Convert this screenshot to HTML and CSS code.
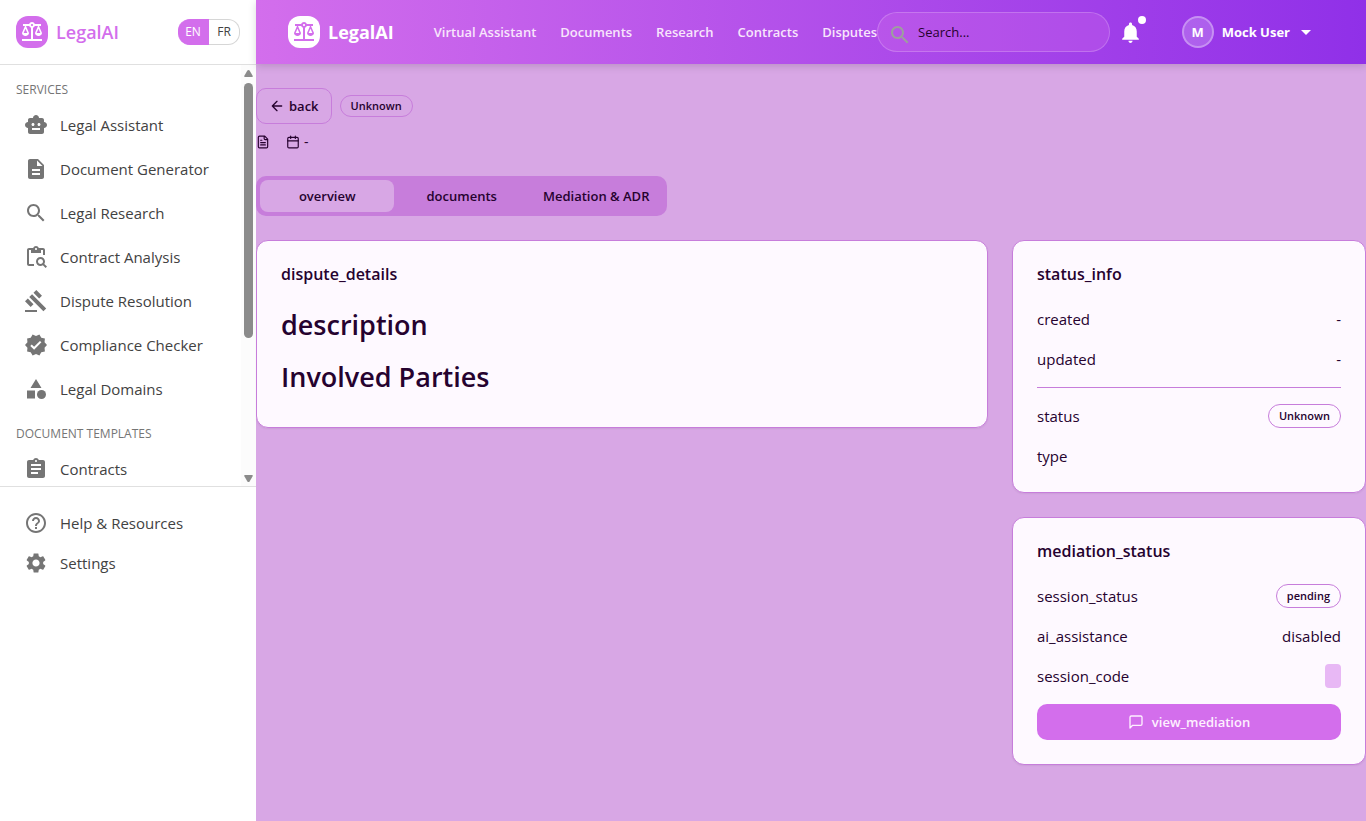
FILE: index.html
```html
<!DOCTYPE html>
<html lang="en">
<head>
<meta charset="utf-8">
<meta name="viewport" content="width=device-width, initial-scale=1">
<title>LegalAI</title>
<link rel="stylesheet" href="styles.css">
</head>
<body>
<svg class="sprite" aria-hidden="true">
  <symbol id="i-balance" viewBox="0 0 24 24"><path d="M13 7.83c.85-.3 1.53-.98 1.83-1.83H18l-3 7c0 1.66 1.57 3 3.5 3s3.5-1.34 3.5-3l-3-7h2V4h-6.17c-.41-1.17-1.52-2-2.83-2s-2.42.83-2.83 2H3v2h2l-3 7c0 1.66 1.57 3 3.5 3S9 14.66 9 13L6 6h3.17c.3.85.98 1.53 1.83 1.83V19H2v2h20v-2h-9V7.83zM20.37 13h-3.74l1.87-4.36L20.37 13zm-13 0H3.63L5.5 8.64 7.37 13zM12 6c-.55 0-1-.45-1-1s.45-1 1-1 1 .45 1 1-.45 1-1 1z"/></symbol>
  <symbol id="i-robot" viewBox="0 0 24 24"><path d="M20 9V7c0-1.1-.9-2-2-2h-3c0-1.66-1.34-3-3-3S9 3.34 9 5H6c-1.1 0-2 .9-2 2v2c-1.66 0-3 1.34-3 3s1.34 3 3 3v4c0 1.1.9 2 2 2h12c1.1 0 2-.9 2-2v-4c1.66 0 3-1.34 3-3s-1.34-3-3-3zM7.5 11.5c0-.83.67-1.5 1.5-1.5s1.5.67 1.5 1.5S9.83 13 9 13s-1.5-.67-1.5-1.5zM16 17H8v-2h8v2zm-1-4c-.83 0-1.500-.67-1.500-1.500S14.170 10 15 10s1.500.67 1.500 1.500S15.830 13 15 13z"/></symbol>
  <symbol id="i-description" viewBox="0 0 24 24"><path d="M14 2H6c-1.1 0-1.99.9-1.99 2L4 20c0 1.1.89 2 1.99 2H18c1.1 0 2-.9 2-2V8l-6-6zm2 16H8v-2h8v2zm0-4H8v-2h8v2zm-3-5V3.5L18.5 9H13z"/></symbol>
  <symbol id="i-search" viewBox="0 0 24 24"><path d="M15.5 14h-.79l-.28-.27C15.41 12.59 16 11.11 16 9.5 16 5.91 13.09 3 9.5 3S3 5.91 3 9.5 5.91 16 9.5 16c1.61 0 3.09-.59 4.23-1.57l.27.28v.79l5 4.99L20.49 19l-4.99-5zm-6 0C7.01 14 5 11.99 5 9.5S7.01 5 9.5 5 14 7.01 14 9.5 11.99 14 9.5 14z"/></symbol>
  <symbol id="i-analysis" viewBox="0 0 24 24"><path d="M5 5h2v3h10V5h2v5h2V5c0-1.1-.9-2-2-2h-4.18C14.4 1.84 13.3 1 12 1s-2.4.84-2.82 2H5c-1.1 0-2 .9-2 2v14c0 1.1.9 2 2 2h5v-2H5V5zm7-2c.55 0 1 .45 1 1s-.45 1-1 1-1-.45-1-1 .45-1 1-1z"/><path d="M20.3 18.9c.4-.7.7-1.5.7-2.4 0-2.5-2-4.5-4.5-4.5S12 14 12 16.5s2 4.5 4.5 4.5c.9 0 1.7-.3 2.4-.7l2.7 2.7 1.4-1.4-2.7-2.7zm-3.8.1c-1.4 0-2.5-1.1-2.5-2.5s1.1-2.5 2.5-2.5 2.5 1.1 2.5 2.5-1.1 2.5-2.5 2.5z"/></symbol>
  <symbol id="i-gavel" viewBox="0 0 24 24"><path d="M1 21h12v2H1zM5.245 8.07l2.83-2.827 14.14 14.142-2.828 2.828zM12.317 1l5.657 5.656-2.83 2.83-5.654-5.66zM3.825 9.485l5.657 5.657-2.828 2.828-5.657-5.657z"/></symbol>
  <symbol id="i-verified" viewBox="0 0 24 24"><path d="M23 12l-2.44-2.79.34-3.69-3.61-.82-1.89-3.2L12 2.96 8.6 1.5 6.71 4.69 3.1 5.5l.34 3.7L1 12l2.44 2.79-.34 3.7 3.61.82L8.6 22.5l3.4-1.47 3.4 1.46 1.89-3.19 3.61-.82-.34-3.69L23 12zm-12.91 4.72l-3.8-3.81 1.48-1.48 2.32 2.33 5.85-5.87 1.48 1.48-7.33 7.35z"/></symbol>
  <symbol id="i-category" viewBox="0 0 24 24"><path d="M12 2l-5.5 9h11zM3 13.5h8v8H3z"/><circle cx="17.5" cy="17.5" r="4.5"/></symbol>
  <symbol id="i-assignment" viewBox="0 0 24 24"><path d="M19 3h-4.18C14.4 1.84 13.3 1 12 1c-1.3 0-2.4.84-2.82 2H5c-1.1 0-2 .9-2 2v14c0 1.1.9 2 2 2h14c1.1 0 2-.9 2-2V5c0-1.1-.9-2-2-2zm-7 0c.55 0 1 .45 1 1s-.45 1-1 1-1-.45-1-1 .45-1 1-1zm2 14H7v-2h7v2zm3-4H7v-2h10v2zm0-4H7V7h10v2z"/></symbol>
  <symbol id="i-help" viewBox="0 0 24 24"><path d="M11 18h2v-2h-2v2zm1-16C6.48 2 2 6.48 2 12s4.48 10 10 10 10-4.48 10-10S17.52 2 12 2zm0 18c-4.41 0-8-3.59-8-8s3.59-8 8-8 8 3.59 8 8-3.59 8-8 8zm0-14c-2.21 0-4 1.79-4 4h2c0-1.1.9-2 2-2s2 .9 2 2c0 2-3 1.75-3 5h2c0-2.25 3-2.5 3-5 0-2.21-1.79-4-4-4z"/></symbol>
  <symbol id="i-settings" viewBox="0 0 24 24"><path d="M19.14 12.94c.04-.3.06-.61.06-.94 0-.32-.02-.64-.07-.94l2.03-1.58c.18-.14.23-.41.12-.61l-1.92-3.32c-.12-.22-.37-.29-.59-.22l-2.39.96c-.5-.38-1.03-.7-1.62-.94l-.36-2.54c-.04-.24-.24-.41-.48-.41h-3.84c-.24 0-.43.17-.47.41l-.36 2.54c-.59.24-1.13.57-1.62.94l-2.39-.96c-.22-.08-.47 0-.59.22L2.74 8.87c-.12.21-.08.47.12.61l2.03 1.58c-.05.3-.09.63-.09.94s.02.64.07.94l-2.03 1.58c-.18.14-.23.41-.12.61l1.92 3.32c.12.22.37.29.59.22l2.39-.96c.5.38 1.03.7 1.62.94l.36 2.54c.05.24.24.41.48.41h3.84c.24 0 .44-.17.47-.41l.36-2.54c.59-.24 1.13-.56 1.62-.94l2.39.96c.22.08.47 0 .59-.22l1.92-3.32c.12-.22.07-.47-.12-.61l-2.01-1.58zM12 15.6c-1.98 0-3.6-1.62-3.6-3.6s1.62-3.6 3.6-3.6 3.6 1.62 3.6 3.6-1.62 3.6-3.6 3.6z"/></symbol>
  <symbol id="i-bell" viewBox="0 0 24 24"><path d="M12 22c1.1 0 2-.9 2-2h-4c0 1.1.89 2 2 2zm6-6v-5c0-3.07-1.64-5.64-4.5-6.32V4c0-.83-.67-1.5-1.5-1.5s-1.5.67-1.5 1.5v.68C7.63 5.36 6 7.92 6 11v5l-2 2v1h16v-1l-2-2z"/></symbol>
  <symbol id="i-caret" viewBox="0 0 24 24"><path d="M7 10l5 5 5-5z"/></symbol>
  <symbol id="i-back" viewBox="0 0 24 24"><path d="m12 19-7-7 7-7M19 12H5"/></symbol>
  <symbol id="i-file" viewBox="0 0 24 24"><path d="M15 2H6a2 2 0 0 0-2 2v16a2 2 0 0 0 2 2h12a2 2 0 0 0 2-2V7ZM14 2v4a2 2 0 0 0 2 2h4M10 9H8M16 13H8M16 17H8"/></symbol>
  <symbol id="i-calendar" viewBox="0 0 24 24"><path d="M8 2v4M16 2v4M3 10h18"/><rect x="3" y="4" width="18" height="18" rx="2"/></symbol>
  <symbol id="i-message" viewBox="0 0 24 24"><path d="M21 15a2 2 0 0 1-2 2H7l-4 4V5a2 2 0 0 1 2-2h14a2 2 0 0 1 2 2z"/></symbol>
</svg>

<div class="app">
  <aside class="sidebar">
    <div class="sidebar-head">
      <a class="brand" href="#"><span class="logo"><svg><use href="#i-balance"/></svg></span>LegalAI</a>
      <div class="lang"><button type="button" class="on">EN</button><button type="button">FR</button></div>
    </div>
    <div class="scroller">
      <nav class="side-nav" aria-label="Services">
        <h2>SERVICES</h2>
        <a href="#"><svg><use href="#i-robot"/></svg>Legal Assistant</a>
        <a href="#"><svg><use href="#i-description"/></svg>Document Generator</a>
        <a href="#"><svg><use href="#i-search"/></svg>Legal Research</a>
        <a href="#"><svg><use href="#i-analysis"/></svg>Contract Analysis</a>
        <a href="#"><svg><use href="#i-gavel"/></svg>Dispute Resolution</a>
        <a href="#"><svg><use href="#i-verified"/></svg>Compliance Checker</a>
        <a href="#"><svg><use href="#i-category"/></svg>Legal Domains</a>
        <h2>DOCUMENT TEMPLATES</h2>
        <a href="#"><svg><use href="#i-assignment"/></svg>Contracts</a>
      </nav>
      <div class="scrollbar" aria-hidden="true">
        <svg viewBox="0 0 9 7"><path d="M4.5 0Q5.200 0 5.600.6L8.800 6Q9 7 8 7H1Q0 7 .2 6L3.400.6Q3.800 0 4.500 0z"/></svg>
        <div class="track"><div class="thumb"></div></div>
        <svg viewBox="0 0 9 7"><path d="M4.500 7Q5.200 7 5.600 6.400L8.800 1Q9 0 8 0H1Q0 0 .2 1L3.400 6.400Q3.800 7 4.500 7z"/></svg>
      </div>
    </div>
    <nav class="side-foot" aria-label="Support">
      <a href="#"><svg><use href="#i-help"/></svg>Help &amp; Resources</a>
      <a href="#"><svg><use href="#i-settings"/></svg>Settings</a>
    </nav>
  </aside>

  <div class="content">
    <header class="topbar">
      <a class="brand light" href="#"><span class="logo"><svg><use href="#i-balance"/></svg></span>LegalAI</a>
      <nav class="top-nav" aria-label="Main">
        <a href="#">Virtual Assistant</a>
        <a href="#">Documents</a>
        <a href="#">Research</a>
        <a href="#">Contracts</a>
        <a href="#">Disputes</a>
      </nav>
      <label class="search"><svg><use href="#i-search"/></svg><input type="search" placeholder="Search..." aria-label="Search"></label>
      <button type="button" class="bell" aria-label="Notifications"><svg><use href="#i-bell"/></svg><span class="dot"></span></button>
      <button type="button" class="user"><span class="avatar">M</span>Mock User<svg><use href="#i-caret"/></svg></button>
    </header>

    <main>
      <div class="row">
        <button type="button" class="back"><svg class="line"><use href="#i-back"/></svg>back</button>
        <span class="badge">Unknown</span>
      </div>
      <div class="meta">
        <svg class="line"><use href="#i-file"/></svg>
        <span class="date"><svg class="line"><use href="#i-calendar"/></svg>-</span>
      </div>
      <div class="tabs" role="tablist">
        <button type="button" role="tab" aria-selected="true">overview</button>
        <button type="button" role="tab" aria-selected="false">documents</button>
        <button type="button" role="tab" aria-selected="false">Mediation &amp; ADR</button>
      </div>
      <div class="grid">
        <section class="card details">
          <h3>dispute_details</h3>
          <h2>description</h2>
          <h2>Involved Parties</h2>
        </section>
        <div class="side">
          <section class="card">
            <h3>status_info</h3>
            <dl>
              <div><dt>created</dt><dd>-</dd></div>
              <div><dt>updated</dt><dd>-</dd></div>
            </dl>
            <hr>
            <dl>
              <div><dt>status</dt><dd class="badge">Unknown</dd></div>
              <div><dt>type</dt><dd></dd></div>
            </dl>
          </section>
          <section class="card">
            <h3>mediation_status</h3>
            <dl>
              <div><dt>session_status</dt><dd class="badge">pending</dd></div>
              <div><dt>ai_assistance</dt><dd>disabled</dd></div>
              <div><dt>session_code</dt><dd class="code"></dd></div>
            </dl>
            <button type="button" class="primary"><svg class="line"><use href="#i-message"/></svg>view_mediation</button>
          </section>
        </div>
      </div>
    </main>
  </div>
</div>
</body>
</html>
```

FILE: styles.css
```css
:root {
  --accent: #d36eec;
  --border: #c77ddb;
  --bg: #d8a7e5;
  --ink: #26022f;
  --surface: #fef9ff;
}

* { box-sizing: border-box; }

body {
  margin: 0;
  font-family: "Open Sans", "Noto Sans", sans-serif;
  font-size: 15px;
  line-height: 24px;
  color: var(--ink);
  background: var(--bg);
}

h2, h3, dl, dd { margin: 0; }
a { color: inherit; text-decoration: none; }
button { font: inherit; color: inherit; cursor: pointer; }
svg { fill: currentColor; flex: none; }
.sprite { display: none; }
.line {
  fill: none;
  stroke: currentColor;
  stroke-width: 2;
  stroke-linecap: round;
  stroke-linejoin: round;
}

.app { display: flex; min-height: 100vh; }
.content { flex: 1; min-width: 0; }

/* Sidebar */
.sidebar { width: 256px; flex: none; background: #fff; color: #424242; }
.sidebar-head {
  display: flex;
  align-items: center;
  justify-content: space-between;
  height: 65px;
  padding: 0 16px;
  border-bottom: 1px solid #e0e0e0;
}
.brand {
  display: flex;
  align-items: center;
  gap: 8px;
  font-size: 18px;
  font-weight: 600;
  color: var(--accent);
}
.logo {
  display: grid;
  place-items: center;
  width: 32px;
  height: 32px;
  border-radius: 12px;
  background: var(--accent);
  color: #fff;
}
.logo svg { width: 24px; height: 24px; }
.lang { display: flex; height: 26px; }
.lang button {
  width: 31px;
  padding: 0;
  border: 1px solid #d6d6d6;
  border-left: 0;
  border-radius: 0 12px 12px 0;
  background: #fff;
  font-size: 12px;
}
.lang .on {
  border-color: var(--accent);
  border-radius: 12px 0 0 12px;
  background: var(--accent);
  color: #fff;
}

.scroller { display: flex; height: calc(100vh - 400px); overflow: hidden; }
.side-nav { flex: 1; padding-top: 8px; }
.side-nav h2 {
  padding: 5px 16px 3px;
  font-size: 12px;
  font-weight: 500;
  line-height: 24px;
  color: #757575;
}
.side-nav a, .side-foot a {
  display: flex;
  align-items: center;
  gap: 12px;
  height: 40px;
  padding: 0 24px;
}
.side-nav a { margin-bottom: 4px; }
.side-nav a + h2 { margin-top: 8px; }
.side-nav svg, .side-foot svg { width: 24px; height: 24px; color: #757575; }
.scrollbar {
  display: flex;
  flex-direction: column;
  align-items: center;
  gap: 6px;
  width: 15px;
  padding: 5px 0 4px;
  background: #fcfcfc;
}
.scrollbar svg { width: 9px; height: 7px; fill: #8b8b8b; }
.track { flex: 1; }
.thumb { width: 9px; height: 66%; border-radius: 5px; background: #8b8b8b; }
.side-foot { padding-top: 16px; border-top: 1px solid #e0e0e0; }

/* Top bar */
.topbar {
  display: flex;
  align-items: center;
  height: 64px;
  padding: 0 48px 0 32px;
  color: #fff;
  background: linear-gradient(90deg, #d36eec, #9030e8);
  box-shadow: 0 2px 8px rgba(0, 0, 0, 0.15);
}
.light { color: #fff; font-weight: 700; }
.light .logo { background: #fff; color: var(--accent); }
.top-nav {
  display: flex;
  gap: 24px;
  margin-left: 40px;
  font-size: 13px;
  font-weight: 650;
  white-space: nowrap;
  color: #f8e5fc;
}
.search {
  display: flex;
  align-items: center;
  gap: 6px;
  flex: 1;
  min-width: 0;
  height: 40px;
  padding: 0 12px 0 10px;
  border: 1px solid rgba(255, 255, 255, 0.2);
  border-radius: 20px;
  background: rgba(211, 110, 236, 0.3);
}
.search svg { width: 24px; height: 24px; margin-top: 6px; color: #9e9e9e; }
.search input {
  flex: 1;
  min-width: 0;
  padding: 0;
  border: 0;
  outline: 0;
  background: none;
  font: inherit;
  font-size: 13px;
  color: var(--ink);
}
.search input::placeholder { color: var(--ink); opacity: 1; }
.bell {
  position: relative;
  display: flex;
  margin-left: 8px;
  padding: 0;
  border: 0;
  background: none;
}
.bell svg { width: 25px; height: 25px; }
.dot {
  position: absolute;
  top: -4px;
  right: -3px;
  width: 8px;
  height: 8px;
  border-radius: 50%;
  background: #fff;
}
.user {
  display: flex;
  align-items: center;
  gap: 8px;
  margin-left: 39px;
  padding: 0;
  border: 0;
  background: none;
  font-size: 13px;
  font-weight: 700;
  white-space: nowrap;
}
.user svg { width: 24px; height: 24px; margin-left: -4px; }
.avatar {
  display: grid;
  place-items: center;
  width: 32px;
  height: 32px;
  border: 2px solid rgba(255, 255, 255, 0.3);
  border-radius: 50%;
  background: rgba(255, 255, 255, 0.2);
}

/* Dispute page */
main { padding: 24px 0; }
.row { display: flex; align-items: center; gap: 8px; }
.back {
  display: flex;
  align-items: center;
  gap: 4px;
  height: 36px;
  padding: 0 12px;
  border: 1px solid var(--border);
  border-radius: 10px;
  background: none;
  font-size: 13px;
  font-weight: 600;
}
.line { width: 16px; height: 16px; }
.badge {
  padding: 0 10px;
  border: 1px solid var(--border);
  border-radius: 12px;
  font-size: 11px;
  font-weight: 600;
  line-height: 20px;
}
.meta { display: flex; align-items: center; gap: 16px; margin-top: 8px; font-size: 14px; line-height: 20px; }
.date { display: flex; align-items: center; gap: 4px; }
.meta .line { width: 14px; height: 14px; }
.tabs {
  display: inline-grid;
  grid-template-columns: repeat(3, 1fr);
  height: 40px;
  margin: 24px 0;
  padding: 4px;
  border-radius: 10px;
  background: var(--border);
  vertical-align: top;
}
.tabs button {
  padding: 0 14px;
  border: 0;
  border-radius: 8px;
  background: none;
  font-size: 13px;
  font-weight: 600;
}
.tabs [aria-selected="true"] { background: var(--bg); }

.grid { display: grid; grid-template-columns: repeat(3, 1fr); gap: 24px; align-items: start; }
.side { display: grid; gap: 24px; }
.card {
  padding: 24px;
  border: 1px solid var(--border);
  border-radius: 12px;
  background: var(--surface);
  box-shadow: 0 1px 2px rgba(0, 0, 0, 0.06);
}
.details { grid-column: span 2; padding-bottom: 32px; }
.card h3 { font-size: 16px; font-weight: 600; line-height: 18px; }
.card h2 { margin-top: 16px; font-size: 27px; font-weight: 600; line-height: 36px; }
.card h3 + h2 { margin-top: 24px; }
.card dl { display: grid; gap: 16px; }
.card h3 + dl { margin-top: 24px; }
.card dl div { display: flex; align-items: center; justify-content: space-between; height: 24px; }
.card .badge { line-height: 22px; }
.card hr { margin: 16px 0; border: 0; border-top: 1px solid var(--border); }
.code { width: 16px; height: 24px; border-radius: 4px; background: #e8b8f5; }
.primary {
  display: flex;
  align-items: center;
  justify-content: center;
  gap: 8px;
  width: 100%;
  height: 36px;
  margin-top: 16px;
  border: 0;
  border-radius: 10px;
  background: var(--accent);
  font-size: 13px;
  font-weight: 650;
  color: #fef0ff;
}
```
